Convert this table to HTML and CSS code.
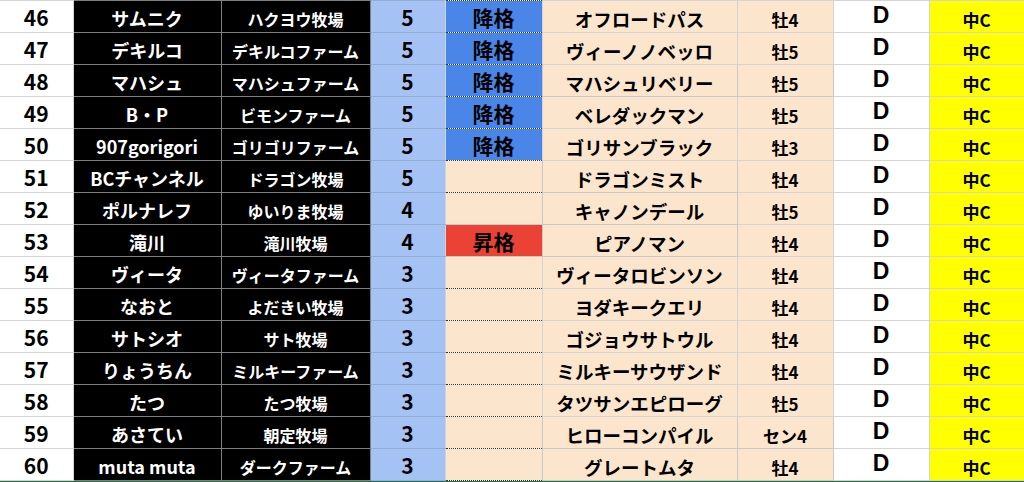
FILE: index.html
```html
<!DOCTYPE html>
<html lang="ja">
<head>
<meta charset="utf-8">
<link rel="stylesheet" href="styles.css">
</head>
<body>
<table class="sheet">
<colgroup>
<col class="c-a"><col class="c-b"><col class="c-c"><col class="c-d"><col class="c-e"><col class="c-f"><col class="c-g"><col class="c-h"><col class="c-i">
</colgroup>
<tbody>
<tr><td class="no">46</td><td class="owner">サムニク</td><td class="farm">ハクヨウ牧場</td><td class="rank">5</td><td class="mv down">降格</td><td class="horse">オフロードパス</td><td class="sex">牡4</td><td class="grade">D</td><td class="dist">中C</td></tr>
<tr><td class="no">47</td><td class="owner">デキルコ</td><td class="farm">デキルコファーム</td><td class="rank">5</td><td class="mv down">降格</td><td class="horse">ヴィーノノベッロ</td><td class="sex">牡5</td><td class="grade">D</td><td class="dist">中C</td></tr>
<tr><td class="no">48</td><td class="owner">マハシュ</td><td class="farm">マハシュファーム</td><td class="rank">5</td><td class="mv down">降格</td><td class="horse s">マハシュリベリー</td><td class="sex s">牡5</td><td class="grade">D</td><td class="dist">中C</td></tr>
<tr><td class="no">49</td><td class="owner">B・P</td><td class="farm">ビモンファーム</td><td class="rank">5</td><td class="mv down">降格</td><td class="horse">ベレダックマン</td><td class="sex">牡5</td><td class="grade">D</td><td class="dist">中C</td></tr>
<tr><td class="no">50</td><td class="owner">907gorigori</td><td class="farm">ゴリゴリファーム</td><td class="rank">5</td><td class="mv down">降格</td><td class="horse">ゴリサンブラック</td><td class="sex">牡3</td><td class="grade">D</td><td class="dist">中C</td></tr>
<tr><td class="no">51</td><td class="owner">BCチャンネル</td><td class="farm">ドラゴン牧場</td><td class="rank">5</td><td class="mv"></td><td class="horse s">ドラゴンミスト</td><td class="sex">牡4</td><td class="grade">D</td><td class="dist">中C</td></tr>
<tr><td class="no">52</td><td class="owner">ポルナレフ</td><td class="farm">ゆいりま牧場</td><td class="rank">4</td><td class="mv"></td><td class="horse s">キャノンデール</td><td class="sex">牡5</td><td class="grade">D</td><td class="dist">中C</td></tr>
<tr><td class="no">53</td><td class="owner">滝川</td><td class="farm">滝川牧場</td><td class="rank">4</td><td class="mv up">昇格</td><td class="horse s">ピアノマン</td><td class="sex">牡4</td><td class="grade">D</td><td class="dist">中C</td></tr>
<tr><td class="no">54</td><td class="owner">ヴィータ</td><td class="farm">ヴィータファーム</td><td class="rank">3</td><td class="mv"></td><td class="horse">ヴィータロビンソン</td><td class="sex">牡4</td><td class="grade">D</td><td class="dist">中C</td></tr>
<tr><td class="no">55</td><td class="owner">なおと</td><td class="farm">よだきい牧場</td><td class="rank">3</td><td class="mv"></td><td class="horse">ヨダキークエリ</td><td class="sex">牡4</td><td class="grade">D</td><td class="dist">中C</td></tr>
<tr><td class="no">56</td><td class="owner">サトシオ</td><td class="farm">サト牧場</td><td class="rank">3</td><td class="mv"></td><td class="horse">ゴジョウサトウル</td><td class="sex">牡4</td><td class="grade">D</td><td class="dist">中C</td></tr>
<tr><td class="no">57</td><td class="owner">りょうちん</td><td class="farm">ミルキーファーム</td><td class="rank">3</td><td class="mv"></td><td class="horse">ミルキーサウザンド</td><td class="sex">牡4</td><td class="grade">D</td><td class="dist">中C</td></tr>
<tr><td class="no">58</td><td class="owner">たつ</td><td class="farm">たつ牧場</td><td class="rank">3</td><td class="mv"></td><td class="horse">タツサンエピローグ</td><td class="sex">牡5</td><td class="grade">D</td><td class="dist">中C</td></tr>
<tr><td class="no">59</td><td class="owner">あさてい</td><td class="farm">朝定牧場</td><td class="rank">3</td><td class="mv"></td><td class="horse s">ヒローコンパイル</td><td class="sex s">セン4</td><td class="grade">D</td><td class="dist">中C</td></tr>
<tr><td class="no">60</td><td class="owner">muta muta</td><td class="farm">ダークファーム</td><td class="rank">3</td><td class="mv"></td><td class="horse s">グレートムタ</td><td class="sex s">牡4</td><td class="grade">D</td><td class="dist">中C</td></tr>
</tbody>
</table>
<div class="tabline"></div>
</body>
</html>
```

FILE: styles.css
```css
html, body {
  margin: 0;
  padding: 0;
  background: #ffffff;
}
body {
  width: 1024px;
  height: 482px;
  overflow: hidden;
  font-family: "Noto Sans CJK JP", "Noto Sans", sans-serif;
  font-weight: 700;
  color: #000;
}
.sheet {
  border-collapse: collapse;
  table-layout: fixed;
  width: 1024px;
}
.c-a { width: 73px; }
.c-b { width: 148px; }
.c-c { width: 149px; }
.c-d { width: 75px; }
.c-e { width: 97px; }
.c-f { width: 195px; }
.c-g { width: 96px; }
.c-h { width: 96px; }
.c-i { width: 95px; }

.sheet tr { height: 32px; }
.sheet td {
  padding: 0 0 2px 0;
  height: 28px;
  text-align: center;
  vertical-align: bottom;
  line-height: 1.2;
  white-space: nowrap;
  overflow: hidden;
  border: 1px solid #d4d4d4;
}
.no {
  font-size: 21px;
  border-left: none !important;
}
.owner, .farm {
  background: #000;
  color: #fff;
  border: 1px solid #7f7f7f !important;
}
.owner { font-size: 18px; }
.farm { font-size: 16px; padding-bottom: 3px !important; }
.rank {
  background: #a4c2f4;
  font-size: 21px;
  border-top: 1px solid #93acd8 !important;
  border-bottom: 1px solid #93acd8 !important;
}
.mv {
  background: #fce5cd;
  font-size: 21px;
  border: 1px dotted #333 !important;
}
.mv.down { background: #4a86e8; }
.mv.up {
  background: #ea4335;
  border: 1px solid #c8c8c8 !important;
}
.horse {
  background: #fce5cd;
  font-size: 18.5px;
  border: 1px dotted #333;
}
.sex {
  background: #fce5cd;
  font-size: 17px;
  border: 1px dotted #333;
}
.horse.s, .sex.s { border: 1px solid #c8c8c8; }
.grade {
  font-family: "Liberation Sans", Arial, sans-serif;
  font-size: 23px;
  line-height: 1;
  vertical-align: top;
  padding: 4px 0 0 0;
  height: 26px;
  border-top: 1px solid #dcdcdc;
  border-bottom: 1px solid #dcdcdc;
}
.dist {
  background: #ffff00;
  font-size: 17px;
  padding-bottom: 2px;
  border: 1px dotted #333;
  border-right: none;
}
.tabline {
  height: 2px;
  background: #217346;
}
```
